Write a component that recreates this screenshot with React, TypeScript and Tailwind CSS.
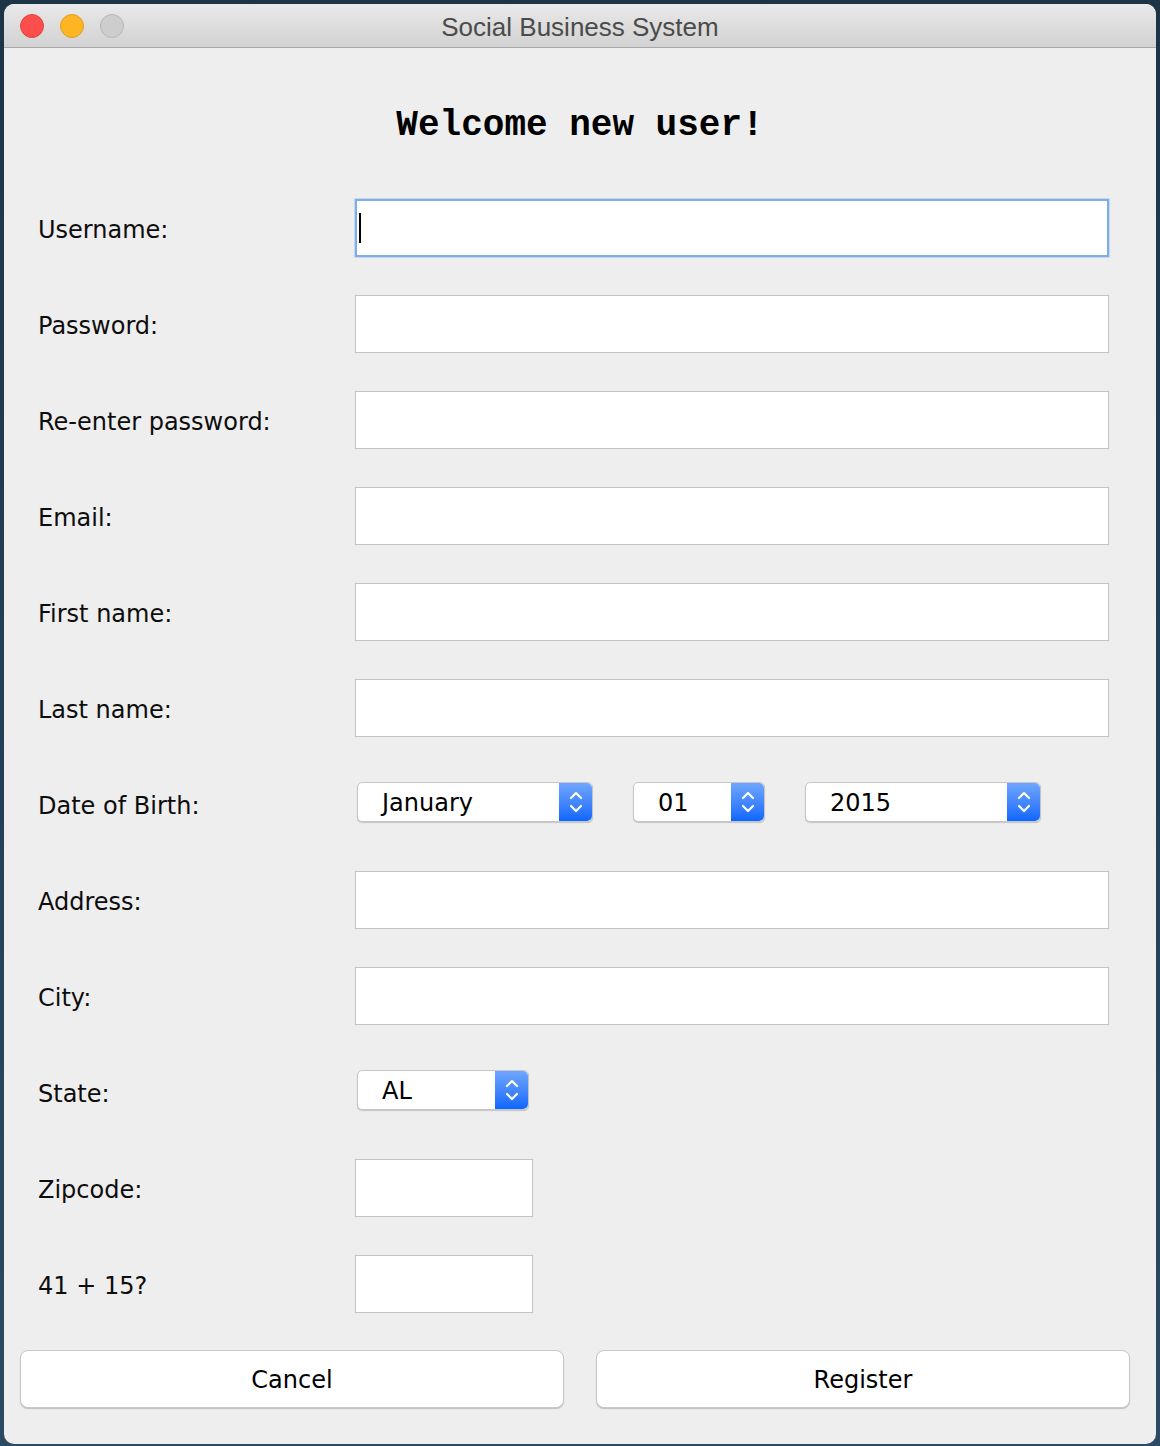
const rows: { label: string; kind: "text" | "short" | "dob" | "state"; focus?: boolean }[] = [
  { label: "Username:", kind: "text", focus: true },
  { label: "Password:", kind: "text" },
  { label: "Re-enter password:", kind: "text" },
  { label: "Email:", kind: "text" },
  { label: "First name:", kind: "text" },
  { label: "Last name:", kind: "text" },
  { label: "Date of Birth:", kind: "dob" },
  { label: "Address:", kind: "text" },
  { label: "City:", kind: "text" },
  { label: "State:", kind: "state" },
  { label: "Zipcode:", kind: "short" },
  { label: "41 + 15?", kind: "short" },
];

function Stepper() {
  return (
    <div className="flex h-full w-[33px] items-center justify-center rounded-r-[5px] bg-gradient-to-b from-[#6fa6ff] to-[#0b66fe]">
      <svg width="14" height="26" viewBox="0 0 14 26" fill="none" stroke="white" strokeWidth="2.2" strokeLinecap="round" strokeLinejoin="round">
        <path d="M2 9 L7 4 L12 9" />
        <path d="M2 17 L7 22 L12 17" />
      </svg>
    </div>
  );
}

function Combo({ value, width }: { value: string; width: string }) {
  return (
    <div
      className={`flex h-[40px] ${width} items-center rounded-[5px] border border-[#c6c6c6] bg-white shadow-[0_1px_1px_rgba(0,0,0,0.18)]`}
    >
      <span className="flex-1 pl-[24px] pt-[2px] text-[24px] leading-none text-black">{value}</span>
      <Stepper />
    </div>
  );
}

export default function App() {
  return (
    <div className="h-[1446px] w-[1160px] bg-gradient-to-b from-[#1d3447] to-[#2c4a63] p-[4px] font-['DejaVu_Sans',sans-serif]">
      <div className="flex h-[1440px] w-[1152px] flex-col overflow-hidden rounded-[10px] bg-[#eeeeee]">
        {/* Title bar */}
        <div className="relative flex h-[44px] shrink-0 items-center justify-center border-b border-[#a9a9a9] bg-gradient-to-b from-[#e9e9e9] to-[#d2d2d2] pt-[3px]">
          <div className="absolute left-[16px] top-[10px] flex gap-[16px]">
            <span className="h-[24px] w-[24px] rounded-full border border-[#e0443e] bg-[#fc4e4c]" />
            <span className="h-[24px] w-[24px] rounded-full border border-[#dea123] bg-[#fdb524]" />
            <span className="h-[24px] w-[24px] rounded-full border border-[#b5b5b5] bg-[#cdcdcd]" />
          </div>
          <span className="font-['Liberation_Sans',sans-serif] text-[26px] text-[#4b4b4b]">Social Business System</span>
        </div>

        {/* Heading */}
        <div className="h-[132px] shrink-0 pt-[60px] text-center font-['Liberation_Mono',monospace] text-[36px] font-bold leading-[36px] text-black">
          Welcome new user!
        </div>

        {/* Form */}
        <div className="flex flex-col">
          {rows.map((r) => (
            <div key={r.label} className="flex h-[96px] items-center pl-[34px]">
              <div className="w-[317px] pt-[4px] text-[24px] text-[#0d0d0d]">{r.label}</div>
              {r.kind === "text" &&
                (r.focus ? (
                  <div className="flex h-[58px] w-[754px] items-center border-2 border-[#7eaeea] bg-white pl-[2px] shadow-[0_0_0_1px_rgba(126,174,234,0.35)]">
                    <span className="h-[30px] w-[2px] bg-black" />
                  </div>
                ) : (
                  <div className="h-[58px] w-[754px] border border-[#c4c4c4] bg-white" />
                ))}
              {r.kind === "short" && <div className="h-[58px] w-[178px] border border-[#c4c4c4] bg-white" />}
              {r.kind === "dob" && (
                <div className="-mt-[4px] ml-[2px] flex gap-[40px]">
                  <Combo value="January" width="w-[236px]" />
                  <Combo value="01" width="w-[132px]" />
                  <Combo value="2015" width="w-[236px]" />
                </div>
              )}
              {r.kind === "state" && (
                <div className="-mt-[4px] ml-[2px]">
                  <Combo value="AL" width="w-[172px]" />
                </div>
              )}
            </div>
          ))}
        </div>

        {/* Buttons */}
        <div className="mt-[18px] flex gap-[32px] pl-[16px]">
          <button className="h-[58px] w-[544px] rounded-[8px] border border-[#c8c8c8] bg-white pt-[2px] text-[24px] text-black shadow-[0_1px_1px_rgba(0,0,0,0.2)]">
            Cancel
          </button>
          <button className="h-[58px] w-[534px] rounded-[8px] border border-[#c8c8c8] bg-white pt-[2px] text-[24px] text-black shadow-[0_1px_1px_rgba(0,0,0,0.2)]">
            Register
          </button>
        </div>
      </div>
    </div>
  );
}
